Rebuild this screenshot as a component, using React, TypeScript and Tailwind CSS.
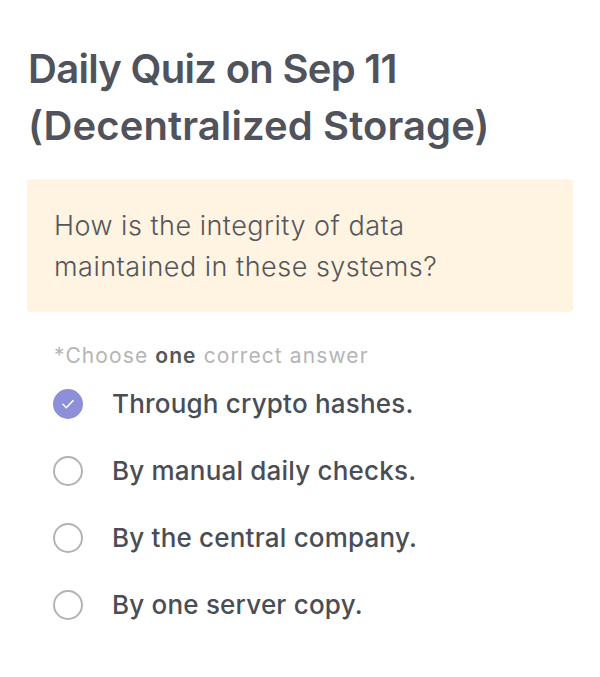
import React from "react";

const options = [
  "Through crypto hashes.",
  "By manual daily checks.",
  "By the central company.",
  "By one server copy.",
];

export default function App() {
  return (
    <div
      className="w-[600px] h-[677px] bg-white px-[27px] pt-[40px]"
      style={{ fontFamily: "Inter, 'Noto Sans', sans-serif" }}
    >
      <h1 className="text-[40px] leading-[57px] font-semibold text-[#50535b] tracking-[-0.7px] pl-[1px]">
        Daily Quiz on Sep 11
        <br />
        <span className="tracking-[0.1px]">(Decentralized Storage)</span>
      </h1>
      <div className="mt-[25px] h-[133px] rounded-[4px] bg-[#fff3e1] px-[27px] pt-[26px]">
        <p className="text-[27px] leading-[41px] font-light text-[#55565a] tracking-[0.5px]">
          How is the integrity of data
          <br />
          maintained in these systems?
        </p>
      </div>
      <p className="mt-[30px] pl-[27px] text-[21px] leading-[28px] text-[#b5b5b5] tracking-[1.1px]">
        *Choose <span className="font-semibold text-[#55565a]">one</span> correct answer
      </p>
      <div className="mt-[0px] flex flex-col pl-[26px]">
        {options.map((o, i) => (
          <div key={o} className="flex h-[67px] items-center gap-[29px]">
            {i === 0 ? (
              <div className="flex h-[30px] w-[30px] shrink-0 items-center justify-center rounded-full bg-[#8e8fd9]">
                <svg width="18" height="18" viewBox="0 0 16 16" fill="none">
                  <path
                    d="M3.5 8.3l3 3 6-6.3"
                    stroke="white"
                    strokeWidth="1.3"
                    strokeLinecap="round"
                    strokeLinejoin="round"
                  />
                </svg>
              </div>
            ) : (
              <div className="h-[30px] w-[30px] shrink-0 rounded-full border-[2px] border-[#b3b3b3]" />
            )}
            <span className="text-[26px] text-[#4a4d55] font-medium tracking-[0.2px]">{o}</span>
          </div>
        ))}
      </div>
    </div>
  );
}
